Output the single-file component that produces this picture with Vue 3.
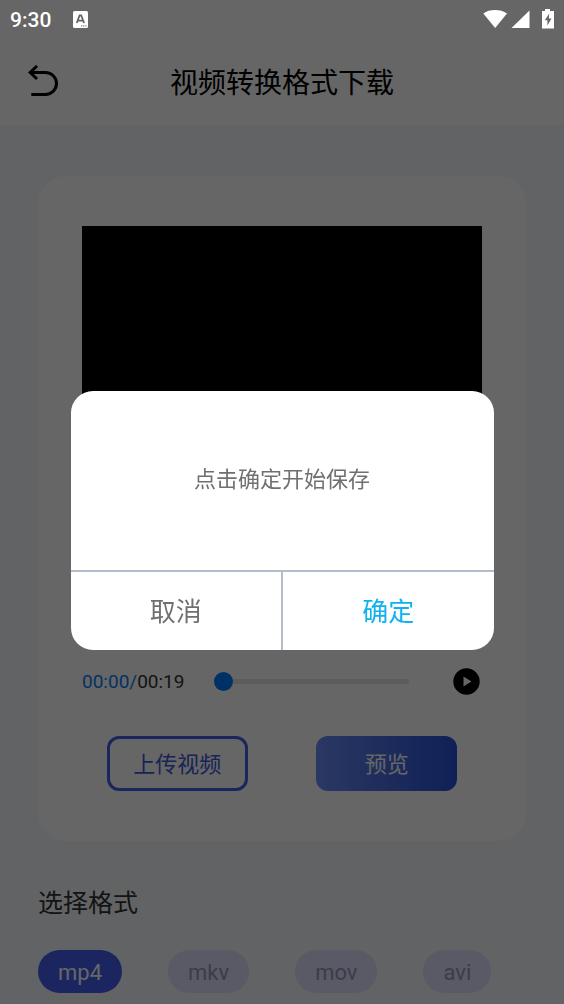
<script setup>
import { ref } from 'vue'

const formats = ['mp4', 'mkv', 'mov', 'avi']
const selected = ref('mp4')
const position = ref(0)
const open = ref(true)
</script>

<template>
  <div class="page">
    <div class="status">
      <span class="clock">9:30</span>
      <svg class="badge" width="15" height="17" viewBox="0 0 15 17" aria-hidden="true">
        <rect width="15" height="17" rx="1.5" fill="#fff" />
        <path d="M3.7 12 6.6 4.4h1.6L11.1 12M5 9.6h4.8" fill="none" stroke="#666" stroke-width="1.8" />
        <path d="M8 14.9h1.3M10.1 14.9h1.3M12.2 14.9h1.3" stroke="#888" stroke-width="1.4" />
      </svg>
      <svg class="signals" width="72" height="20" viewBox="0 0 72 20" aria-hidden="true">
        <path d="M1.3 4.4C7.5-.2 18.5-.2 25 4.4L13.2 19z" fill="#fff" />
        <path d="M47.5 1.5V19H29.5z" fill="#fff" />
        <path d="M63 0h5v2h4v17.5H60V2h3z" fill="#fff" />
        <path d="M67.2 4.5 62.8 11.2h2.6v5.3l4.1-7h-2.7z" fill="#666" />
      </svg>
    </div>

    <header class="header">
      <button class="back" type="button" aria-label="返回">
        <svg width="32" height="34" viewBox="0 0 32 34" fill="none" stroke="#000" stroke-width="3">
          <path d="M3 7.5h14.5a11 11 0 0 1 0 22H3.3M9 1 2.2 7.5 9 14" />
        </svg>
      </button>
      <h1>视频转换格式下载</h1>
    </header>

    <main class="content">
      <section class="card">
        <div class="video"></div>
        <div class="player">
          <span class="time"><span class="current">00:00/</span>00:19</span>
          <input v-model="position" class="seek" type="range" min="0" max="19" aria-label="播放进度" />
          <button class="play" type="button" aria-label="播放">
            <svg width="27" height="27" viewBox="0 0 27 27">
              <circle cx="13.5" cy="13.5" r="13.2" fill="#000" />
              <path d="M10.5 8.5v10l8-5z" fill="#fff" />
            </svg>
          </button>
        </div>
        <div class="actions">
          <button class="action outline" type="button">上传视频</button>
          <button class="action filled" type="button">预览</button>
        </div>
      </section>

      <h2>选择格式</h2>
      <div class="chips">
        <button
          v-for="f in formats"
          :key="f"
          type="button"
          class="chip"
          :class="{ active: f === selected }"
          @click="selected = f"
        >{{ f }}</button>
      </div>
    </main>

    <div v-if="open" class="overlay">
      <div class="dialog" role="dialog" aria-modal="true" aria-labelledby="dialog-message">
        <p id="dialog-message">点击确定开始保存</p>
        <div class="choices">
          <button type="button" @click="open = false">取消</button>
          <button type="button" class="confirm" @click="open = false">确定</button>
        </div>
      </div>
    </div>
  </div>
</template>

<style>
body {
  margin: 0;
  background: #f4f7fb;
}
</style>

<style scoped>
.page {
  min-height: 100vh;
  box-sizing: border-box;
  background: #f4f7fb;
  color: #333;
  font-family: Roboto, "Noto Sans CJK SC", sans-serif;
}
button {
  margin: 0;
  padding: 0;
  border: 0;
  background: none;
  font: inherit;
  color: inherit;
  cursor: pointer;
}
svg {
  display: block;
}
.status {
  position: relative;
  z-index: 2;
  display: flex;
  align-items: center;
  height: 38px;
  padding: 0 10px;
  box-sizing: border-box;
  background: #666;
  color: #fff;
}
.clock {
  padding-top: 2px;
  font-size: 21px;
  font-weight: 500;
  line-height: 24px;
}
.badge {
  margin-left: 22px;
}
.signals {
  margin-left: auto;
}
.header {
  display: grid;
  grid-template-columns: 32px 1fr 32px;
  align-items: center;
  height: 87px;
  padding: 0 28px;
  background: #fff;
}
h1 {
  margin: 0;
  padding-top: 4px;
  color: #000;
  font-size: 28px;
  font-weight: 400;
  line-height: 40px;
  text-align: center;
}
.content {
  padding: 51px 38px 11px;
}
.card {
  padding: 50px 0;
  border-radius: 28px;
  background: #fff;
}
.video {
  height: 410px;
  margin: 0 44px;
  background: #000;
}
.player {
  display: flex;
  align-items: center;
  height: 27px;
  margin: 32px 46px 41px 44px;
}
.time {
  font-size: 19px;
  line-height: 27px;
}
.current {
  color: #0a7df5;
}
.seek {
  flex: 1;
  min-width: 0;
  height: 19px;
  margin: 0 44px 0 30px;
  appearance: none;
  background: none;
}
.seek::-webkit-slider-runnable-track {
  height: 5px;
  border-radius: 3px;
  background: #e6e6e6;
}
.seek::-webkit-slider-thumb {
  width: 19px;
  height: 19px;
  margin-top: -7px;
  appearance: none;
  border-radius: 50%;
  background: #007aff;
}
.actions {
  display: flex;
  justify-content: space-evenly;
}
.action {
  width: 141px;
  height: 55px;
  padding-bottom: 4px;
  box-sizing: border-box;
  border-radius: 12px;
  font-size: 22px;
}
.outline {
  border: 3px solid #4560ea;
  color: #3e5ad8;
}
.filled {
  background: linear-gradient(90deg, #6a8cf5, #2a50d8);
  color: #fff;
}
h2 {
  margin: 45px 0 28px;
  font-size: 25px;
  font-weight: 400;
  line-height: 36px;
}
.chips {
  display: flex;
  flex-wrap: wrap;
  gap: 20px 46px;
}
.chip {
  height: 43px;
  padding: 2px 20px 0;
  border-radius: 22px;
  background: #dfe0ff;
  color: #909ab4;
  font-size: 22px;
}
.active {
  background: #445df0;
  color: #fff;
}
.overlay {
  position: fixed;
  inset: 0;
  z-index: 1;
  display: flex;
  align-items: center;
  justify-content: center;
  padding-top: 37px;
  background: rgba(0, 0, 0, 0.6);
}
.dialog {
  width: 75%;
  overflow: hidden;
  border-radius: 22px;
  background: #fff;
  color: #707070;
}
.dialog p {
  margin: 0;
  padding: 73px 20px 74px;
  font-size: 22px;
  line-height: 32px;
  text-align: center;
}
.choices {
  display: flex;
  border-top: 2px solid #b4bdcb;
}
.choices button {
  flex: 1;
  height: 78px;
  padding-bottom: 4px;
  font-size: 26px;
}
.choices .confirm {
  border-left: 2px solid #b4bdcb;
  color: #0eb2f0;
}
</style>
